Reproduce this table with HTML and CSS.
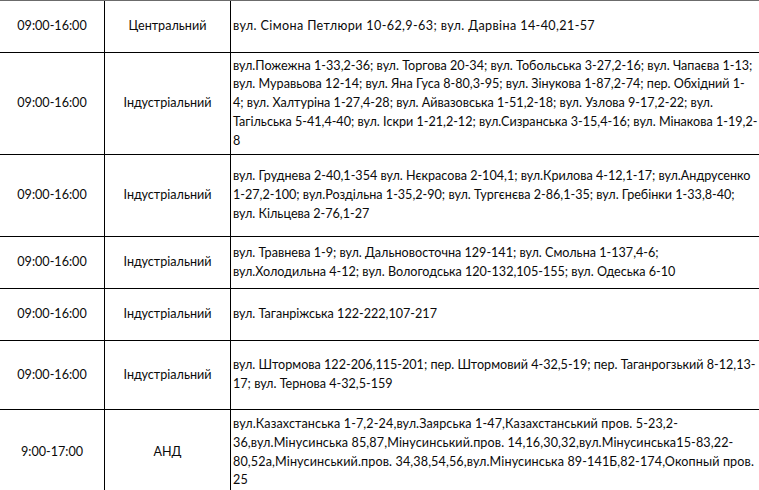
FILE: index.html
```html
<!DOCTYPE html>
<html lang="uk">
<head>
<meta charset="utf-8">
<title>Графік відключень</title>
<link rel="stylesheet" href="styles.css">
</head>
<body>
<div class="sheet">
  <div class="row r1">
    <div class="cell time">09:00-16:00</div>
    <div class="cell district">Центральний</div>
    <div class="cell addr"><span class="ln wide">вул. Сімона Петлюри 10-62,9-63; вул. Дарвіна 14-40,21-57</span></div>
  </div>
  <div class="row r2">
    <div class="cell time">09:00-16:00</div>
    <div class="cell district">Індустріальний</div>
    <div class="cell addr">
      <span class="ln">вул.Пожежна 1-33,2-36; вул. Торгова 20-34; вул. Тобольська 3-27,2-16; вул. Чапаєва 1-13;</span>
      <span class="ln">вул. Муравьова 12-14; вул. Яна Гуса 8-80,3-95; вул. Зінукова 1-87,2-74; пер. Обхідний 1-</span>
      <span class="ln">4; вул. Халтуріна 1-27,4-28; вул. Айвазовська 1-51,2-18; вул. Узлова 9-17,2-22; вул.</span>
      <span class="ln">Тагільська 5-41,4-40; вул. Іскри 1-21,2-12; вул.Сизранська 3-15,4-16; вул. Мінакова 1-19,2-</span>
      <span class="ln">8</span>
    </div>
  </div>
  <div class="row r3">
    <div class="cell time">09:00-16:00</div>
    <div class="cell district">Індустріальний</div>
    <div class="cell addr">
      <span class="ln">вул. Груднева 2-40,1-354 вул. Нєкрасова 2-104,1; вул.Крилова 4-12,1-17; вул.Андрусенко</span>
      <span class="ln">1-27,2-100; вул.Роздільна 1-35,2-90; вул. Тургєнєва 2-86,1-35; вул. Гребінки 1-33,8-40;</span>
      <span class="ln">вул. Кільцева 2-76,1-27</span>
    </div>
  </div>
  <div class="row r4">
    <div class="cell time">09:00-16:00</div>
    <div class="cell district">Індустріальний</div>
    <div class="cell addr">
      <span class="ln">вул. Травнева 1-9; вул. Дальновосточна 129-141; вул. Смольна 1-137,4-6;</span>
      <span class="ln">вул.Холодильна 4-12; вул. Вологодська 120-132,105-155; вул. Одеська 6-10</span>
    </div>
  </div>
  <div class="row r5">
    <div class="cell time">09:00-16:00</div>
    <div class="cell district">Індустріальний</div>
    <div class="cell addr"><span class="ln">вул. Таганріжська 122-222,107-217</span></div>
  </div>
  <div class="row r6">
    <div class="cell time">09:00-16:00</div>
    <div class="cell district">Індустріальний</div>
    <div class="cell addr">
      <span class="ln">вул. Штормова 122-206,115-201; пер. Штормовий 4-32,5-19; пер. Таганрогзький 8-12,13-</span>
      <span class="ln">17; вул. Тернова 4-32,5-159</span>
    </div>
  </div>
  <div class="row r7">
    <div class="cell time">9:00-17:00</div>
    <div class="cell district">АНД</div>
    <div class="cell addr">
      <span class="ln">вул.Казахстанська 1-7,2-24,вул.Заярська 1-47,Казахстанський пров. 5-23,2-</span>
      <span class="ln">36,вул.Мінусинська 85,87,Мінусинський.пров. 14,16,30,32,вул.Мінусинська15-83,22-</span>
      <span class="ln">80,52а,Мінусинський.пров. 34,38,54,56,вул.Мінусинська 89-141Б,82-174,Окопный пров.</span>
      <span class="ln">25</span>
    </div>
  </div>
</div>
</body>
</html>
```

FILE: styles.css
```css
html, body {
  margin: 0;
  padding: 0;
  background: #ffffff;
}

body {
  width: 759px;
  height: 490px;
  overflow: hidden;
  font-family: Lato, "Noto Sans", sans-serif;
  font-size: 12.6px;
  color: #0a0a0a;
}

.sheet {
  width: 790px;
  border-top: 1px solid #6b6b6b;
}

.row {
  display: grid;
  grid-template-columns: 105px 126px 1fr;
  border-bottom: 1px solid #000;
  box-sizing: border-box;
}

.r1 { height: 52px; }
.r2 { height: 102px; }
.r3 { height: 82px; }
.r4 { height: 52px; }
.r5 { height: 52px; }
.r6 { height: 69px; }
.r7 { height: 86px; }

.cell {
  display: flex;
  flex-direction: column;
  justify-content: center;
  line-height: 18.8px;
  box-sizing: border-box;
}

.time,
.district {
  align-items: center;
  border-right: 1px solid #000;
}

.addr {
  padding-left: 2px;
  align-items: flex-start;
}

.ln {
  display: block;
  white-space: nowrap;
}

.ln.wide {
  letter-spacing: 0.38px;
}

.r7 .ln {
  letter-spacing: 0.12px;
}
```
